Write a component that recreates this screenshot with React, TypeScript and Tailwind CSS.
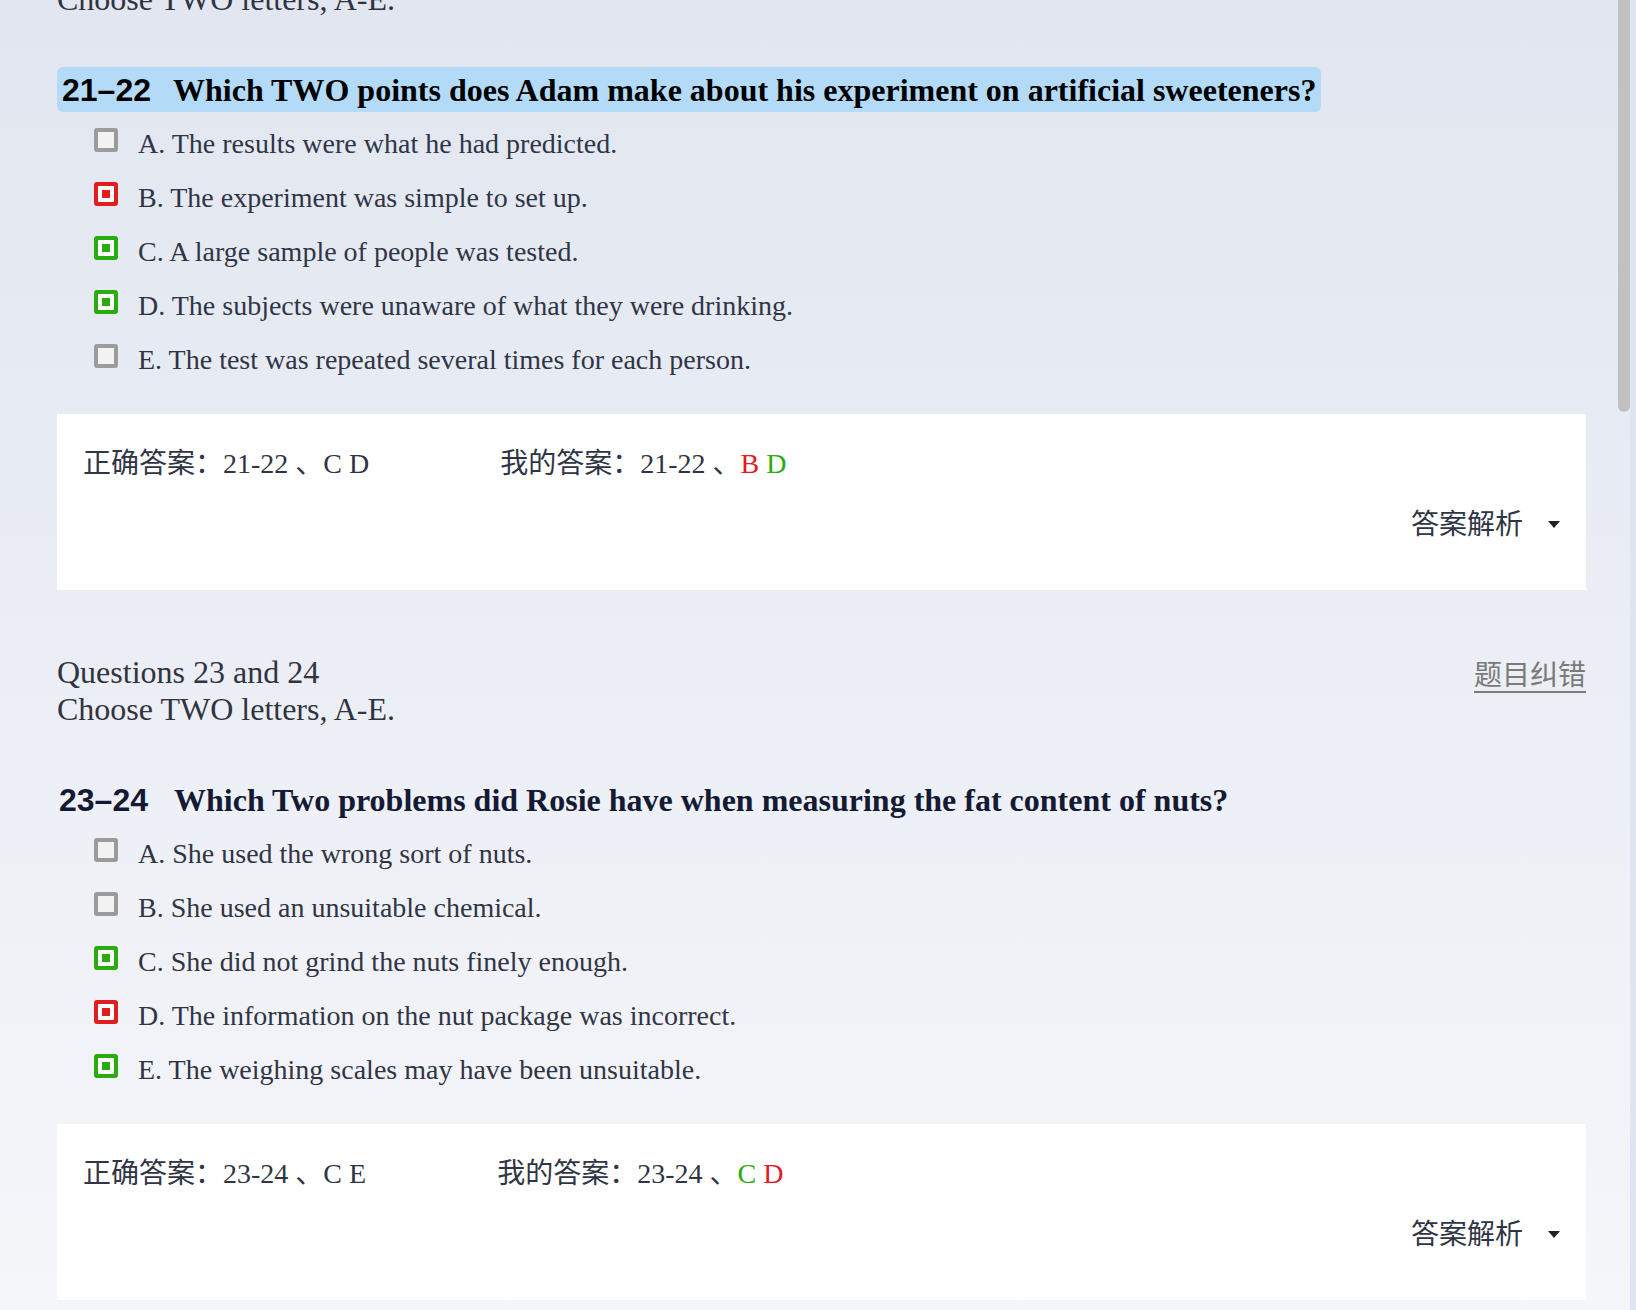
import React from 'react';

type Mark = 'none' | 'right' | 'wrong';

interface Option {
  letter: string;
  text: string;
  mark: Mark;
}

interface Question {
  title: string;
  range: string;
  prompt: string;
  highlighted: boolean;
  options: Option[];
  correct: string;
  mine: { letter: string; ok: boolean }[];
}

const serif = "font-['Liberation_Serif','Times_New_Roman','Noto_Sans_CJK_SC',serif]";

const questions: Question[] = [
  {
    title: 'Questions 21 and 22',
    range: '21–22',
    prompt: 'Which TWO points does Adam make about his experiment on artificial sweeteners?',
    highlighted: true,
    options: [
      { letter: 'A', text: 'The results were what he had predicted.', mark: 'none' },
      { letter: 'B', text: 'The experiment was simple to set up.', mark: 'wrong' },
      { letter: 'C', text: 'A large sample of people was tested.', mark: 'right' },
      { letter: 'D', text: 'The subjects were unaware of what they were drinking.', mark: 'right' },
      { letter: 'E', text: 'The test was repeated several times for each person.', mark: 'none' },
    ],
    correct: '21-22 、C D',
    mine: [
      { letter: 'B', ok: false },
      { letter: 'D', ok: true },
    ],
  },
  {
    title: 'Questions 23 and 24',
    range: '23–24',
    prompt: 'Which Two problems did Rosie have when measuring the fat content of nuts?',
    highlighted: false,
    options: [
      { letter: 'A', text: 'She used the wrong sort of nuts.', mark: 'none' },
      { letter: 'B', text: 'She used an unsuitable chemical.', mark: 'none' },
      { letter: 'C', text: 'She did not grind the nuts finely enough.', mark: 'right' },
      { letter: 'D', text: 'The information on the nut package was incorrect.', mark: 'wrong' },
      { letter: 'E', text: 'The weighing scales may have been unsuitable.', mark: 'right' },
    ],
    correct: '23-24 、C E',
    mine: [
      { letter: 'C', ok: true },
      { letter: 'D', ok: false },
    ],
  },
];

function CheckBox({ mark }: { mark: Mark }) {
  if (mark === 'none') {
    return <div className="w-[24px] h-[24px] shrink-0 rounded-[3px] border-[4px] border-[#9b9b9b] bg-[#f2f2f2]" />;
  }
  const isRight = mark === 'right';
  return (
    <div
      className={`w-[24px] h-[24px] shrink-0 rounded-[3px] border-[4px] bg-white flex items-center justify-center ${
        isRight ? 'border-[#2aab0e]' : 'border-[#e21d1d]'
      }`}
    >
      <div className={`w-[8px] h-[8px] ${isRight ? 'bg-[#2aab0e]' : 'bg-[#e21d1d]'}`} />
    </div>
  );
}

function QuestionBlock({ q }: { q: Question }) {
  return (
    <section>
      {/* 题目说明 */}
      <div className="flex justify-between items-start">
        <div className="text-[32px] leading-[37px] text-[#30343f]">
          <div>{q.title}</div>
          <div>Choose TWO letters, A-E.</div>
        </div>
        <a className="mt-[3px] text-[28px] leading-[37px] text-[#7a7a7a] underline underline-offset-[6px] cursor-pointer">
          题目纠错
        </a>
      </div>

      {/* 题干 */}
      <div className="mt-[49px] flex">
        <div
          className={`h-[45px] flex items-center font-bold rounded-[6px] ${
            q.highlighted ? 'bg-[#b3dbf7] px-[5px] text-black' : 'pl-[2px] text-[#141a33]'
          }`}
        >
          <span
            className={`font-['Liberation_Sans',Arial,sans-serif] text-[32px] ${
              q.highlighted ? 'mr-[22px]' : 'mr-[26px]'
            }`}
          >
            {q.range}
          </span>
          <span className="text-[32px]">{q.prompt}</span>
        </div>
      </div>

      {/* 选项 */}
      <div className="mt-[3px]">
        {q.options.map((o) => (
          <div key={o.letter} className="h-[54px] flex items-start pl-[37px]">
            <div className="mt-[13px]">
              <CheckBox mark={o.mark} />
            </div>
            <div className="ml-[20px] text-[28px] leading-[58px] text-[#303545]">
              {o.letter}. {o.text}
            </div>
          </div>
        ))}
      </div>

      {/* 答案 */}
      <div className="mt-[29px] bg-white pt-[30px] pb-[45px] pl-[26px] pr-[26px] text-[28px] text-[#303545]">
        <div className="h-[40px] flex items-center">
          <span>正确答案：{q.correct}</span>
          <span className="ml-[131px]">
            我的答案：{q.range.replace('–', '-')} 、
            {q.mine.map((m, i) => (
              <span key={m.letter} className={m.ok ? 'text-[#2aab0e]' : 'text-[#e21d1d]'}>
                {i > 0 ? ' ' : ''}
                {m.letter}
              </span>
            ))}
          </span>
        </div>
        <div className="mt-[21px] h-[40px] flex items-center justify-end">
          <span>答案解析</span>
          <svg className="ml-[25px]" width="12" height="8" viewBox="0 0 12 8">
            <path d="M0 0 L12 0 L6 7 Z" fill="#222" />
          </svg>
        </div>
      </div>
    </section>
  );
}

export default function App() {
  return (
    <div className={`relative h-[1310px] overflow-hidden bg-linear-to-b from-[#e1e6f0] to-[#f5f6fa] ${serif}`}>
      <div className="-mt-[56px] pl-[57px] pr-[50px] flex flex-col gap-[64px]">
        {questions.map((q) => (
          <QuestionBlock key={q.range} q={q} />
        ))}
      </div>

      {/* 滚动条 */}
      <div className="absolute top-0 right-0 w-[6px] h-full bg-[#dde5f3]" />
      <div className="absolute top-0 right-[6px] w-[12px] h-[412px] rounded-b-full bg-[#c1c1c1]" />
    </div>
  );
}
